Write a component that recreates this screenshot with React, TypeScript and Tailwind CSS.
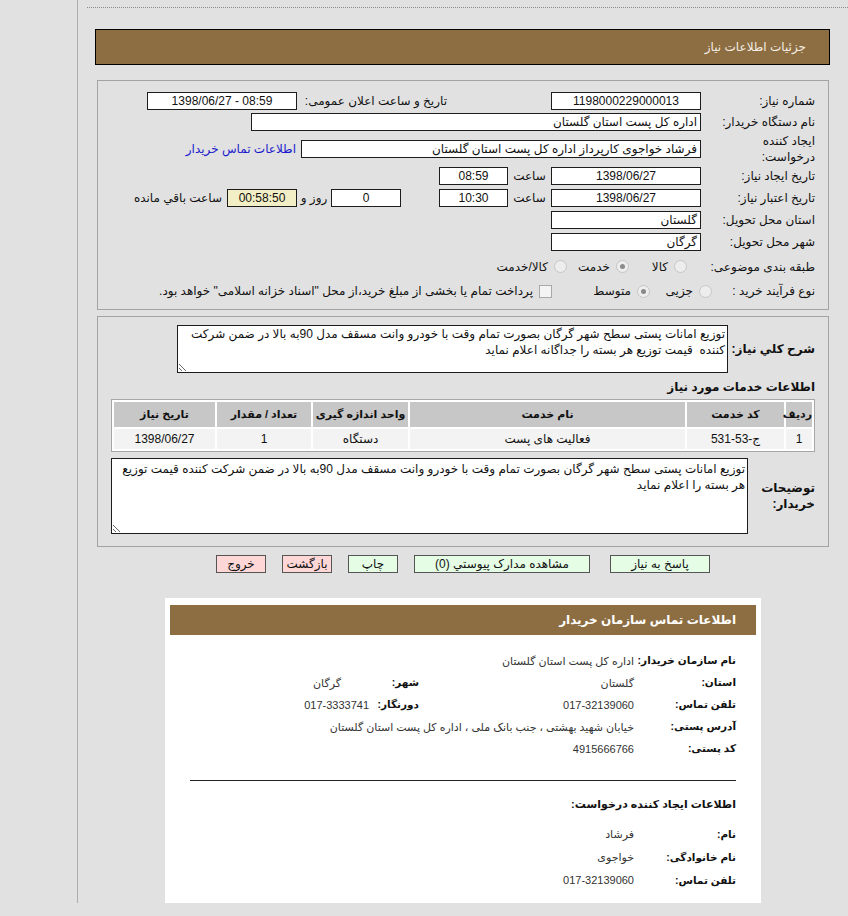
import React from 'react';

function Field({
  w,
  children,
  right,
  bg = 'bg-white',
}: {
  w: string;
  children?: React.ReactNode;
  right?: boolean;
  bg?: string;
}) {
  return (
    <div
      className={`${w} ${bg} h-[18px] shrink-0 overflow-hidden whitespace-nowrap border border-[#1c1c1c] px-[3px] text-[12px] leading-[16px] ${
        right ? 'text-right' : 'text-center'
      }`}
    >
      {children}
    </div>
  );
}

function Radio({ checked }: { checked?: boolean }) {
  return (
    <span className="flex h-[13px] w-[13px] shrink-0 items-center justify-center rounded-full border border-[#c6c6c6] bg-[#ededed]">
      {checked && <span className="h-[5px] w-[5px] rounded-full bg-[#8a8a8a]" />}
    </span>
  );
}

function Label({ children, w = 'w-[114px]' }: { children: React.ReactNode; w?: string }) {
  return <div className={`${w} shrink-0 whitespace-nowrap text-[12px]`}>{children}</div>;
}

function CardRow({ label, value, h = 'h-[22px]' }: { label: string; value: string; h?: string }) {
  return (
    <div className={`flex ${h} items-center`}>
      <div className="w-[102px] shrink-0 whitespace-nowrap text-[10.5px] font-bold">{label}</div>
      <div className="whitespace-nowrap text-[11px] text-[#333]">{value}</div>
    </div>
  );
}

export default function App() {
  return (
    <div className="flex min-h-[916px] bg-[#e1e1e1] font-['Liberation_Sans','DejaVu_Sans',sans-serif] text-[#111]">
      <div className="h-[903px] w-[78px] shrink-0 border-r border-[#adadad]" />
      <div className="w-[770px] shrink-0">
        <div className="ml-[9px] mt-[7px] border-t border-dotted border-[#8a8a8a]" />

        <div
          dir="rtl"
          className="ml-[17px] mt-[21px] flex h-[36px] w-[735px] items-center border border-black bg-[#8d6e42] pr-[23px] text-[12px] text-[#f3ede2]"
        >
          جزئیات اطلاعات نیاز
        </div>

        {/* main info */}
        <div dir="rtl" className="ml-[19px] mt-[15px] w-[732px] border border-[#a3a3a3] pb-[7px] pr-[13px] pt-[9px] text-[12px]">
          <div className="flex h-[21px] items-center">
            <Label>شماره نیاز:</Label>
            <Field w="w-[150px]">1198000229000013</Field>
            <div className="mr-[104px] w-[150px] shrink-0 whitespace-nowrap">تاریخ و ساعت اعلان عمومی:</div>
            <Field w="w-[150px]">
              <span dir="ltr">1398/06/27 - 08:59</span>
            </Field>
          </div>
          <div className="flex h-[21px] items-center">
            <Label>نام دستگاه خریدار:</Label>
            <Field w="w-[450px]" right>
              اداره کل پست استان گلستان
            </Field>
          </div>
          <div className="flex h-[33px] items-center">
            <div className="w-[114px] shrink-0 leading-[16px]">
              ایجاد کننده
              <br />
              درخواست:
            </div>
            <Field w="w-[400px]" right>
              فرشاد خواجوی کارپرداز اداره کل پست استان گلستان
            </Field>
            <a className="mr-[5px] whitespace-nowrap text-[#1a1acc]">اطلاعات تماس خریدار</a>
          </div>
          <div className="flex h-[22px] items-center">
            <Label>تاریخ ایجاد نیاز:</Label>
            <Field w="w-[150px]">1398/06/27</Field>
            <div className="w-[43px] shrink-0 text-center">ساعت</div>
            <Field w="w-[69px]">08:59</Field>
          </div>
          <div className="flex h-[22px] items-center">
            <Label>تاریخ اعتبار نیاز:</Label>
            <Field w="w-[150px]">1398/06/27</Field>
            <div className="w-[43px] shrink-0 text-center">ساعت</div>
            <Field w="w-[69px]">10:30</Field>
            <div className="w-[38px] shrink-0" />
            <Field w="w-[70px]">0</Field>
            <div className="w-[34px] shrink-0 text-center">روز و</div>
            <Field w="w-[70px]" bg="bg-[#f2eec6]">
              00:58:50
            </Field>
            <div className="mr-[5px] whitespace-nowrap">ساعت باقي مانده</div>
          </div>
          <div className="flex h-[22px] items-center">
            <Label>استان محل تحویل:</Label>
            <Field w="w-[150px]" right>
              گلستان
            </Field>
          </div>
          <div className="flex h-[22px] items-center">
            <Label>شهر محل تحویل:</Label>
            <Field w="w-[150px]" right>
              گرگان
            </Field>
          </div>
          <div className="flex h-[27px] items-center">
            <Label>طبقه بندی موضوعی:</Label>
            <div className="mr-[14px] flex w-[58px] shrink-0 items-center gap-[6px]">
              <Radio />
              <span>کالا</span>
            </div>
            <div className="flex w-[62px] shrink-0 items-center gap-[6px]">
              <Radio checked />
              <span>خدمت</span>
            </div>
            <div className="flex items-center gap-[6px]">
              <Radio />
              <span>کالا/خدمت</span>
            </div>
          </div>
          <div className="flex h-[22px] items-center">
            <Label w="w-[103px]">نوع فرآیند خرید :</Label>
            <div className="flex w-[62px] shrink-0 items-center gap-[6px]">
              <Radio />
              <span>جزیی</span>
            </div>
            <div className="flex w-[98px] shrink-0 items-center gap-[6px]">
              <Radio checked />
              <span>متوسط</span>
            </div>
            <div className="flex items-center gap-[6px] whitespace-nowrap">
              <span className="h-[13px] w-[13px] shrink-0 border border-[#a9a9a9] bg-[#f4f4f4]" />
              <span>پرداخت تمام یا بخشی از مبلغ خرید،از محل "اسناد خزانه اسلامی" خواهد بود.</span>
            </div>
          </div>
        </div>

        {/* description and services */}
        <div dir="rtl" className="ml-[19px] mt-[6px] w-[732px] border border-[#a3a3a3] pb-[12px] pr-[13px] pt-[8px] text-[12px]">
          <div className="flex items-center">
            <div className="w-[87px] shrink-0 whitespace-nowrap text-[12px] font-bold">شرح کلي نیاز:</div>
            <textarea
              dir="rtl"
              readOnly
              className="h-[48px] w-[551px] shrink-0 border border-[#1c1c1c] bg-white px-[2px] py-0 text-[12px] leading-[16px] outline-none"
              defaultValue="توزیع امانات پستی سطح شهر گرگان بصورت تمام وقت با خودرو وانت مسقف مدل 90به بالا در ضمن شرکت کننده  قیمت توزیع هر بسته را جداگانه اعلام نماید"
            />
          </div>
          <div className="mt-[5px] flex h-[18px] items-center text-[12px] font-bold">اطلاعات خدمات مورد نیاز</div>
          <table className="mt-[3px] w-[704px] table-fixed border-separate border-spacing-[2px] border border-[#a6a6a6] bg-white text-[12px]">
            <thead>
              <tr className="h-[25px] whitespace-nowrap bg-[#c7c7c7] text-[11px]">
                <th className="w-[26px] font-bold">ردیف</th>
                <th className="w-[97px] font-bold">کد خدمت</th>
                <th className="w-[275px] font-bold">نام خدمت</th>
                <th className="w-[95px] font-bold">واحد اندازه گیری</th>
                <th className="w-[94px] font-bold">تعداد / مقدار</th>
                <th className="font-bold">تاریخ نیاز</th>
              </tr>
            </thead>
            <tbody>
              <tr className="h-[20px] bg-[#f3f3f3] text-center">
                <td>1</td>
                <td>ج-53-531</td>
                <td>فعالیت های پست</td>
                <td>دستگاه</td>
                <td>1</td>
                <td>1398/06/27</td>
              </tr>
            </tbody>
          </table>
          <div className="mt-[6px] flex items-center">
            <div className="w-[67px] shrink-0 whitespace-nowrap text-[12px] font-bold leading-[16px]">
              توضیحات
              <br />
              خریدار:
            </div>
            <textarea
              dir="rtl"
              readOnly
              className="h-[76px] w-[637px] shrink-0 border border-[#1c1c1c] bg-white px-[2px] py-[2px] text-[12px] leading-[16px] outline-none"
              defaultValue="توزیع امانات پستی سطح شهر گرگان بصورت تمام وقت با خودرو وانت مسقف مدل 90به بالا در ضمن شرکت کننده قیمت توزیع هر بسته را اعلام نماید"
            />
          </div>
        </div>

        {/* buttons */}
        <div dir="rtl" className="mt-[8px] flex justify-center text-[12px] leading-[16px]">
          <div className="h-[18px] w-[100px] border border-[#555] bg-[#e5fde5] text-center">پاسخ به نیاز</div>
          <div className="mr-[20px] h-[18px] w-[176px] border border-[#555] bg-[#e5fde5] text-center">مشاهده مدارک پیوستي (0)</div>
          <div className="mr-[16px] h-[18px] w-[50px] border border-[#555] bg-[#e5fde5] text-center">چاپ</div>
          <div className="mr-[16px] h-[18px] w-[50px] whitespace-nowrap border border-[#555] bg-[#ffd7d7] text-center">بازگشت</div>
          <div className="mr-[16px] h-[18px] w-[50px] border border-[#555] bg-[#ffd7d7] text-center">خروج</div>
        </div>

        {/* contact card */}
        <div dir="rtl" className="ml-[87px] mt-[25px] h-[305px] w-[596px] bg-white px-[5px] pt-[7px]">
          <div className="flex h-[30px] items-center bg-[#8d6e42] pr-[20px] text-[12px] font-bold text-white">
            اطلاعات تماس سازمان خریدار
          </div>
          <div className="px-[20px]">
            <div className="mt-[15px]">
              <CardRow label="نام سازمان خریدار:" value="اداره کل پست استان گلستان" />
              <div className="flex h-[22px] items-center">
                <div className="w-[102px] shrink-0 text-[10.5px] font-bold">استان:</div>
                <div className="w-[215px] shrink-0 text-[11px] text-[#333]">گلستان</div>
                <div className="w-[50px] shrink-0 whitespace-nowrap text-[10.5px] font-bold">شهر:</div>
                <div className="pr-[28px] text-[11px] text-[#333]">گرگان</div>
              </div>
              <div className="flex h-[22px] items-center">
                <div className="w-[102px] shrink-0 text-[10.5px] font-bold">تلفن تماس:</div>
                <div className="w-[215px] shrink-0 text-[11px] text-[#333]">017-32139060</div>
                <div className="w-[50px] shrink-0 whitespace-nowrap text-[10.5px] font-bold">دورنگار:</div>
                <div className="text-[11px] text-[#333]">017-3333741</div>
              </div>
              <CardRow label="آدرس پستی:" value="خیابان شهید بهشتی ، جنب بانک ملی ، اداره کل پست استان گلستان" />
              <CardRow label="کد پستی:" value="4915666766" />
            </div>
            <div className="mt-[20px] border-t border-[#222]" />
            <div className="mt-[14px] flex h-[18px] items-center text-[11px] font-bold">اطلاعات ایجاد کننده درخواست:</div>
            <div className="mt-[10px]">
              <CardRow label="نام:" value="فرشاد" h="h-[23px]" />
              <CardRow label="نام خانوادگی:" value="خواجوی" h="h-[23px]" />
              <CardRow label="تلفن تماس:" value="017-32139060" h="h-[23px]" />
            </div>
          </div>
        </div>
      </div>
    </div>
  );
}
